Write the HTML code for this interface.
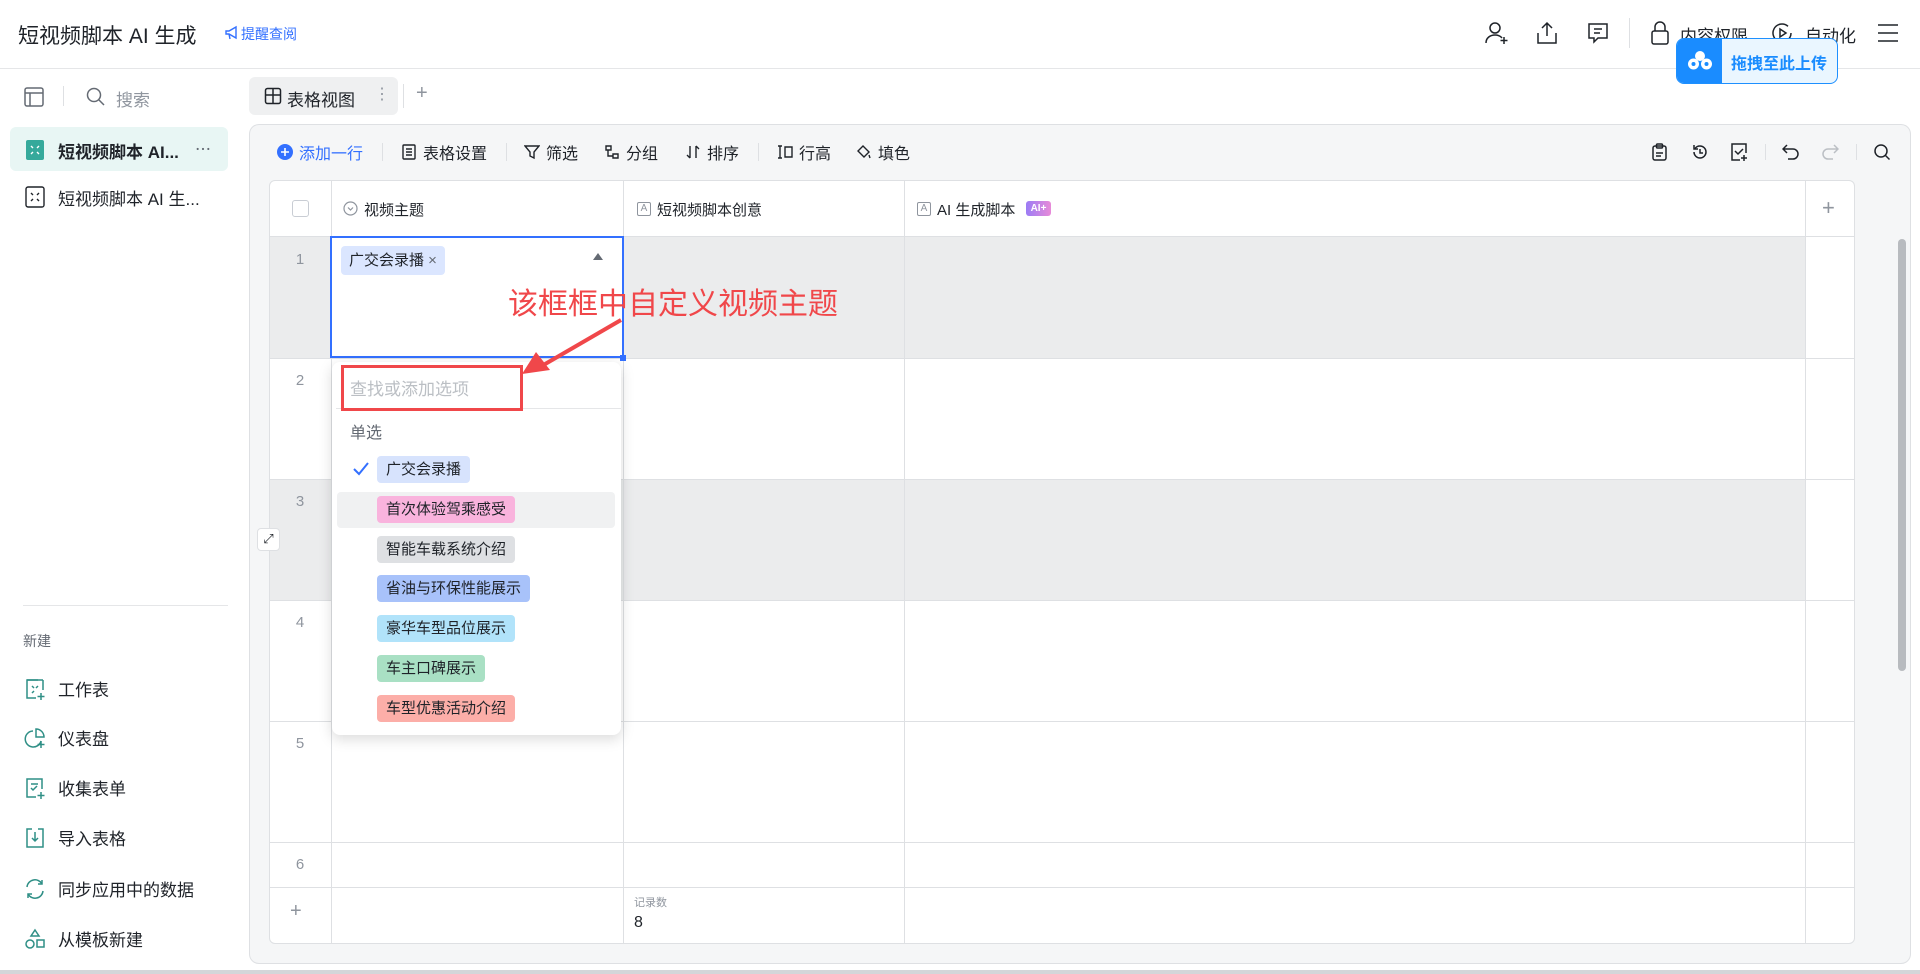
<!DOCTYPE html>
<html><head><meta charset="utf-8"><style>
*{margin:0;padding:0;box-sizing:border-box}
body{width:1920px;height:974px;overflow:hidden;background:#fff;font-family:"Liberation Sans","Noto Sans CJK SC",sans-serif;color:#1f2329;position:relative;font-size:16px}
.a{position:absolute}
.ic{position:absolute;fill:none;stroke:#1f2329;stroke-width:1.5}
.tb{position:absolute;top:140px;font-size:16px;color:#1f2329;display:flex;align-items:center;gap:6px}
.sb{position:absolute;left:24px;display:flex;align-items:center;gap:12px;font-size:17px}
.sb svg{width:22px;height:22px;fill:none;stroke:#2f8f86;stroke-width:1.5}
.hl{position:absolute;left:270px;width:1585px;height:1px;background:#dee0e3}
.vl{position:absolute;top:181px;height:763px;width:1px;background:#dee0e3}
.rn{position:absolute;left:269px;width:62px;text-align:center;color:#8f959e;font-size:15px}
.tag{position:absolute;left:377px;height:27px;line-height:27px;padding:0 9px;border-radius:4px;font-size:15px;color:#1f2329}
</style></head><body>
<!-- header -->
<div class="a" style="left:18px;top:20px;font-size:21px;color:#1f2329">短视频脚本 AI 生成</div>
<svg class="a" style="left:224px;top:25px" width="16" height="16" viewBox="0 0 16 16" fill="none" stroke="#3370ff" stroke-width="1.4"><path d="M2 6h3l7-4v11l-7-4H2z"/><path d="M5 9l1 5"/></svg>
<div class="a" style="left:241px;top:24px;font-size:14px;color:#3370ff">提醒查阅</div>
<div class="a" style="left:0;top:68px;width:1920px;height:1px;background:#e5e6e8"></div>
<svg class="ic" style="left:1484px;top:20px" width="26" height="26" viewBox="0 0 26 26"><circle cx="11" cy="8" r="5"/><path d="M2 23c0-5 4-8 9-8s6 2 7 3"/><path d="M20 17v7M16.5 20.5h7"/></svg>
<svg class="ic" style="left:1535px;top:20px" width="24" height="26" viewBox="0 0 24 26"><path d="M12 16V3M7 8l5-5 5 5"/><path d="M3 13v10h18V13"/></svg>
<svg class="ic" style="left:1586px;top:21px" width="24" height="24" viewBox="0 0 24 24"><path d="M3 3h18v14h-9l-4 4v-4H3z"/><path d="M8 8h8M8 12h6"/></svg>
<div class="a" style="left:1629px;top:18px;width:1px;height:30px;background:#dee0e3"></div>
<svg class="ic" style="left:1650px;top:20px" width="20" height="26" viewBox="0 0 20 26"><rect x="2" y="11" width="16" height="13" rx="2"/><path d="M5 11V7a5 5 0 0110 0v4"/></svg>
<div class="a" style="left:1680px;top:22px;font-size:17px;color:#1f2329">内容权限</div>
<svg class="ic" style="left:1770px;top:21px" width="24" height="24" viewBox="0 0 24 24"><path d="M21 12a9 9 0 11-3-6.7"/><path d="M10 8l6 4-6 4z"/></svg>
<div class="a" style="left:1805px;top:22px;font-size:17px;color:#1f2329">自动化</div>
<svg class="ic" style="left:1877px;top:23px" width="22" height="20" viewBox="0 0 22 20"><path d="M1 2h20M1 10h20M1 18h20"/></svg>
<!-- upload btn -->
<div class="a" style="left:1676px;top:38px;width:162px;height:46px;border:1px solid #1e90ff;border-radius:8px;background:#eaf6ff;overflow:hidden">
<div class="a" style="left:0;top:0;width:45px;height:46px;background:#1a8cff"></div>
<svg class="a" style="left:9px;top:10px" width="28" height="24" viewBox="0 0 28 24"><circle cx="14" cy="7" r="5" fill="#fff"/><circle cx="7.5" cy="15" r="5.5" fill="#fff"/><circle cx="20.5" cy="15" r="5.5" fill="#fff"/><circle cx="7.5" cy="15" r="2" fill="#1a8cff"/><circle cx="20.5" cy="15" r="2" fill="#1a8cff"/></svg>
<div class="a" style="left:54px;top:11px;font-size:16px;font-weight:bold;color:#1a8cff">拖拽至此上传</div>
</div>
<!-- sidebar -->
<svg class="ic" style="left:23px;top:86px;stroke:#646a73" width="22" height="22" viewBox="0 0 22 22"><rect x="2" y="2" width="18" height="18" rx="2"/><path d="M2 7h18M7 7v13"/></svg>
<div class="a" style="left:63px;top:86px;width:1px;height:20px;background:#dee0e3"></div>
<svg class="ic" style="left:85px;top:86px;stroke:#646a73" width="22" height="22" viewBox="0 0 22 22"><circle cx="9" cy="9" r="6.5"/><path d="M14 14l5 5"/></svg>
<div class="a" style="left:116px;top:86px;font-size:17px;color:#8f959e">搜索</div>
<div class="a" style="left:10px;top:127px;width:218px;height:44px;background:#e8f6f4;border-radius:6px"></div>
<svg class="a" style="left:25px;top:139px" width="20" height="22" viewBox="0 0 20 22"><rect x="1" y="1" width="18" height="20" rx="2" fill="#35a99b"/><path d="M6 7l2 2M14 7l-2 2M6 15l2-2M14 15l-2-2" stroke="#fff" stroke-width="1.4"/></svg>
<div class="a" style="left:58px;top:138px;font-size:17px;font-weight:bold;color:#1f2329">短视频脚本 AI...</div>
<div class="a" style="left:195px;top:136px;font-size:16px;color:#646a73">⋯</div>
<svg class="a" style="left:25px;top:186px" width="20" height="22" viewBox="0 0 20 22" fill="none" stroke="#1f2329" stroke-width="1.4"><rect x="1" y="1" width="18" height="20" rx="2"/><path d="M6 7l2 2M14 7l-2 2M6 15l2-2M14 15l-2-2"/></svg>
<div class="a" style="left:58px;top:185px;font-size:17px;color:#1f2329">短视频脚本 AI 生...</div>
<div class="a" style="left:23px;top:605px;width:205px;height:1px;background:#e5e6e8"></div>
<div class="a" style="left:23px;top:631px;font-size:14px;color:#646a73">新建</div>
<div class="sb" style="top:676px"><svg viewBox="0 0 22 22"><path d="M14 2H3v18h9M19 2v10"/><path d="M3 2h16"/><path d="M8 8l2 2M14 8l-2 2M8 15l2-2"/><path d="M17 15v7M13.5 18.5h7"/></svg>工作表</div>
<div class="sb" style="top:725px"><svg viewBox="0 0 22 22"><path d="M9 4a8 8 0 108 10"/><path d="M12 2v8h8a8 8 0 00-8-8z"/><path d="M17 14v7M13.5 17.5h7"/></svg>仪表盘</div>
<div class="sb" style="top:775px"><svg viewBox="0 0 22 22"><path d="M12 20H3V2h15v10"/><path d="M7 7h7M7 11l2 2 4-4"/><path d="M17 15v7M13.5 18.5h7"/></svg>收集表单</div>
<div class="sb" style="top:825px"><svg viewBox="0 0 22 22"><path d="M8 2H3v18h16V2h-5"/><path d="M11 5v9M8 11l3 3 3-3"/></svg>导入表格</div>
<div class="sb" style="top:876px"><svg viewBox="0 0 22 22"><path d="M3 9a8 8 0 0115-3M19 13a8 8 0 01-15 3"/><path d="M18 2v4h-4M4 20v-4h4"/></svg>同步应用中的数据</div>
<div class="sb" style="top:926px"><svg viewBox="0 0 22 22"><path d="M11 2l4 6H7z"/><circle cx="6" cy="16" r="4"/><rect x="13" y="12" width="7" height="7"/></svg>从模板新建</div>
<div class="a" style="left:0;top:970px;width:1920px;height:4px;background:#d4d6d9"></div>
<!-- tabs -->
<div class="a" style="left:249px;top:77px;width:149px;height:38px;background:#eff0f1;border-radius:6px"></div>
<svg class="ic" style="left:264px;top:87px" width="18" height="18" viewBox="0 0 18 18"><rect x="1.5" y="1.5" width="15" height="15" rx="2"/><path d="M1.5 8h15M9 1.5v15"/></svg>
<div class="a" style="left:287px;top:86px;font-size:17px">表格视图</div>
<div class="a" style="left:374px;top:84px;font-size:16px;color:#8f959e">⋮</div>
<div class="a" style="left:403px;top:84px;width:1px;height:24px;background:#dee0e3"></div>
<div class="a" style="left:416px;top:82px;font-size:20px;color:#8f959e">+</div>
<!-- panel -->
<div class="a" style="left:249px;top:124px;width:1662px;height:840px;background:#f5f6f7;border:1px solid #dee0e3;border-radius:10px"></div>
<div class="tb" style="left:277px;color:#3370ff"><svg width="16" height="16" viewBox="0 0 16 16"><circle cx="8" cy="8" r="8" fill="#3370ff"/><path d="M8 4v8M4 8h8" stroke="#fff" stroke-width="1.6"/></svg>添加一行</div>
<div class="a" style="left:382px;top:143px;width:1px;height:18px;background:#dee0e3"></div>
<div class="tb" style="left:401px"><svg width="16" height="16" viewBox="0 0 16 16" fill="none" stroke="#1f2329" stroke-width="1.4"><rect x="2" y="1" width="12" height="14" rx="1"/><path d="M5 5h6M5 8h6M5 11h6"/></svg>表格设置</div>
<div class="a" style="left:506px;top:143px;width:1px;height:18px;background:#dee0e3"></div>
<div class="tb" style="left:524px"><svg width="16" height="16" viewBox="0 0 16 16" fill="none" stroke="#1f2329" stroke-width="1.4"><path d="M1 2h14l-5 6v6l-4-2V8z"/></svg>筛选</div>
<div class="tb" style="left:604px"><svg width="16" height="16" viewBox="0 0 16 16" fill="none" stroke="#1f2329" stroke-width="1.4"><path d="M2 2h5v4H2zM9 10h5v4H9zM4 6v6h5"/></svg>分组</div>
<div class="tb" style="left:685px"><svg width="16" height="16" viewBox="0 0 16 16" fill="none" stroke="#1f2329" stroke-width="1.4"><path d="M5 2v12M2 11l3 3M11 14V2M14 5l-3-3"/></svg>排序</div>
<div class="a" style="left:758px;top:143px;width:1px;height:18px;background:#dee0e3"></div>
<div class="tb" style="left:777px"><svg width="16" height="16" viewBox="0 0 16 16" fill="none" stroke="#1f2329" stroke-width="1.4"><path d="M3 2v12M1 2h4M1 14h4M8 3h7v10H8z"/></svg>行高</div>
<div class="tb" style="left:856px"><svg width="16" height="16" viewBox="0 0 16 16" fill="none" stroke="#1f2329" stroke-width="1.4"><path d="M7 2l6 6-5 5-6-6z"/><path d="M13 11l1 3"/></svg>填色</div>
<svg class="ic" style="left:1651px;top:143px" width="17" height="18" viewBox="0 0 17 18"><rect x="2" y="3" width="13" height="14" rx="2"/><rect x="5.5" y="1" width="6" height="4" rx="1"/><path d="M5 10h7M5 13h5"/></svg>
<svg class="ic" style="left:1691px;top:143px" width="18" height="18" viewBox="0 0 18 18"><path d="M3 9a6 6 0 106-6 6 6 0 00-5 2.5"/><path d="M3 2v4h4M9 6v4h3"/></svg>
<svg class="ic" style="left:1730px;top:143px" width="18" height="18" viewBox="0 0 18 18"><path d="M10 17H2V1h14v9"/><path d="M5 8l3 3 5-5M14 12v6M11 15h6"/></svg>
<div class="a" style="left:1765px;top:144px;width:1px;height:16px;background:#dee0e3"></div>
<svg class="ic" style="left:1782px;top:144px" width="18" height="16" viewBox="0 0 18 16"><path d="M5 1L1 5l4 4M1 5h10a5 5 0 010 10H6"/></svg>
<svg class="ic" style="left:1821px;top:144px;stroke:#bbbfc4" width="18" height="16" viewBox="0 0 18 16"><path d="M13 1l4 4-4 4M17 5H7a5 5 0 000 10h5"/></svg>
<div class="a" style="left:1856px;top:144px;width:1px;height:16px;background:#dee0e3"></div>
<svg class="ic" style="left:1873px;top:143px" width="18" height="18" viewBox="0 0 18 18"><circle cx="8" cy="8" r="6"/><path d="M12.5 12.5l4 4"/></svg>
<!-- table -->
<div class="a" style="left:269px;top:180px;width:1586px;height:764px;background:#fff;border:1px solid #dee0e3;border-radius:6px"></div>
<div class="a" style="left:270px;top:237px;width:1535px;height:121px;background:#ebeced"></div>
<div class="a" style="left:270px;top:479px;width:1535px;height:121px;background:#ebeced"></div>
<div class="hl" style="top:236px"></div><div class="hl" style="top:358px"></div><div class="hl" style="top:479px"></div><div class="hl" style="top:600px"></div><div class="hl" style="top:721px"></div><div class="hl" style="top:842px"></div><div class="hl" style="top:887px"></div>
<div class="vl" style="left:331px"></div><div class="vl" style="left:623px"></div><div class="vl" style="left:904px"></div><div class="vl" style="left:1805px"></div>
<div class="a" style="left:292px;top:200px;width:17px;height:17px;border:1px solid #c9cdd4;border-radius:3px;background:#fff"></div>
<svg class="a" style="left:343px;top:201px" width="15" height="15" viewBox="0 0 15 15" fill="none" stroke="#8f959e" stroke-width="1.2"><circle cx="7.5" cy="7.5" r="6.5"/><path d="M5 6.5l2.5 2.5 2.5-2.5"/></svg>
<div class="a" style="left:364px;top:199px;font-size:15px">视频主题</div>
<div class="a" style="left:637px;top:202px;width:14px;height:14px;border:1px solid #8f959e;border-radius:2px;font-size:10px;color:#8f959e;text-align:center;line-height:12px">A</div>
<div class="a" style="left:657px;top:199px;font-size:15px">短视频脚本创意</div>
<div class="a" style="left:917px;top:202px;width:14px;height:14px;border:1px solid #8f959e;border-radius:2px;font-size:10px;color:#8f959e;text-align:center;line-height:12px">A</div>
<div class="a" style="left:937px;top:199px;font-size:15px">AI 生成脚本</div>
<div class="a" style="left:1026px;top:201px;width:25px;height:15px;border-radius:3px;background:linear-gradient(90deg,#9b7cf5,#e88ad8);color:#fff;font-size:10px;font-weight:bold;text-align:center;line-height:15px">AI+</div>
<div class="a" style="left:1822px;top:195px;font-size:22px;color:#8f959e">+</div>
<div class="rn" style="top:251px">1</div><div class="rn" style="top:372px">2</div><div class="rn" style="top:493px">3</div><div class="rn" style="top:614px">4</div><div class="rn" style="top:735px">5</div><div class="rn" style="top:856px">6</div>
<div class="a" style="left:290px;top:900px;font-size:20px;color:#8f959e">+</div>
<div class="a" style="left:634px;top:894px;font-size:11px;color:#8f959e">记录数</div>
<div class="a" style="left:634px;top:914px;font-size:16px">8</div>
<div class="a" style="left:1898px;top:239px;width:8px;height:432px;background:#b8bbbf;border-radius:4px"></div>
<div class="a" style="left:257px;top:528px;width:23px;height:23px;background:#fff;border:1px solid #dee0e3;border-radius:4px;font-size:13px;text-align:center;line-height:20px">⤢</div>
<!-- selected cell -->
<div class="a" style="left:330px;top:236px;width:294px;height:122px;border:2px solid #3370ff;background:#fff"></div>
<div class="a" style="left:620px;top:355px;width:6px;height:6px;background:#3370ff"></div>
<div class="a" style="left:341px;top:246px;height:29px;padding:0 8px;line-height:29px;background:#dbe6ff;border-radius:4px;font-size:15px">广交会录播 <span style="color:#646a73">×</span></div>
<div class="a" style="left:593px;top:253px;width:0;height:0;border-left:5px solid transparent;border-right:5px solid transparent;border-bottom:7px solid #646a73"></div>
<!-- dropdown -->
<div class="a" style="left:332px;top:362px;width:289px;height:373px;background:#fff;border-radius:8px;box-shadow:0 4px 14px rgba(0,0,0,.15)"></div>
<div class="a" style="left:350px;top:375px;font-size:17px;color:#bbbfc4">查找或添加选项</div>
<div class="a" style="left:336px;top:408px;width:285px;height:1px;background:#e5e6e8"></div>
<div class="a" style="left:350px;top:419px;font-size:16px;color:#646a73">单选</div>
<div class="a" style="left:337px;top:492px;width:278px;height:36px;background:#f0f1f2;border-radius:4px"></div>
<svg class="a" style="left:353px;top:462px" width="16" height="14" viewBox="0 0 16 14" fill="none" stroke="#3370ff" stroke-width="2"><path d="M1 7l5 5 9-11"/></svg>
<div class="tag" style="top:456px;background:#d7e3fd">广交会录播</div>
<div class="tag" style="top:496px;background:#f9b3dd">首次体验驾乘感受</div>
<div class="tag" style="top:536px;background:#dee0e3">智能车载系统介绍</div>
<div class="tag" style="top:575px;background:#a8c2fa">省油与环保性能展示</div>
<div class="tag" style="top:615px;background:#b1e3fa">豪华车型品位展示</div>
<div class="tag" style="top:655px;background:#a9e0c4">车主口碑展示</div>
<div class="tag" style="top:695px;background:#fcaea8">车型优惠活动介绍</div>
<!-- annotation -->
<div class="a" style="left:341px;top:365px;width:182px;height:46px;border:3px solid #f0474a"></div>
<div class="a" style="left:508px;top:279px;font-size:30px;color:#f0474a;white-space:nowrap">该框框中自定义视频主题</div>
<svg class="a" style="left:500px;top:310px" width="140" height="80" viewBox="0 0 140 80"><path d="M121 10L40 57" stroke="#f0474a" stroke-width="4"/><path d="M22 64L36 42 50 60z" fill="#f0474a"/></svg>
</body></html>
